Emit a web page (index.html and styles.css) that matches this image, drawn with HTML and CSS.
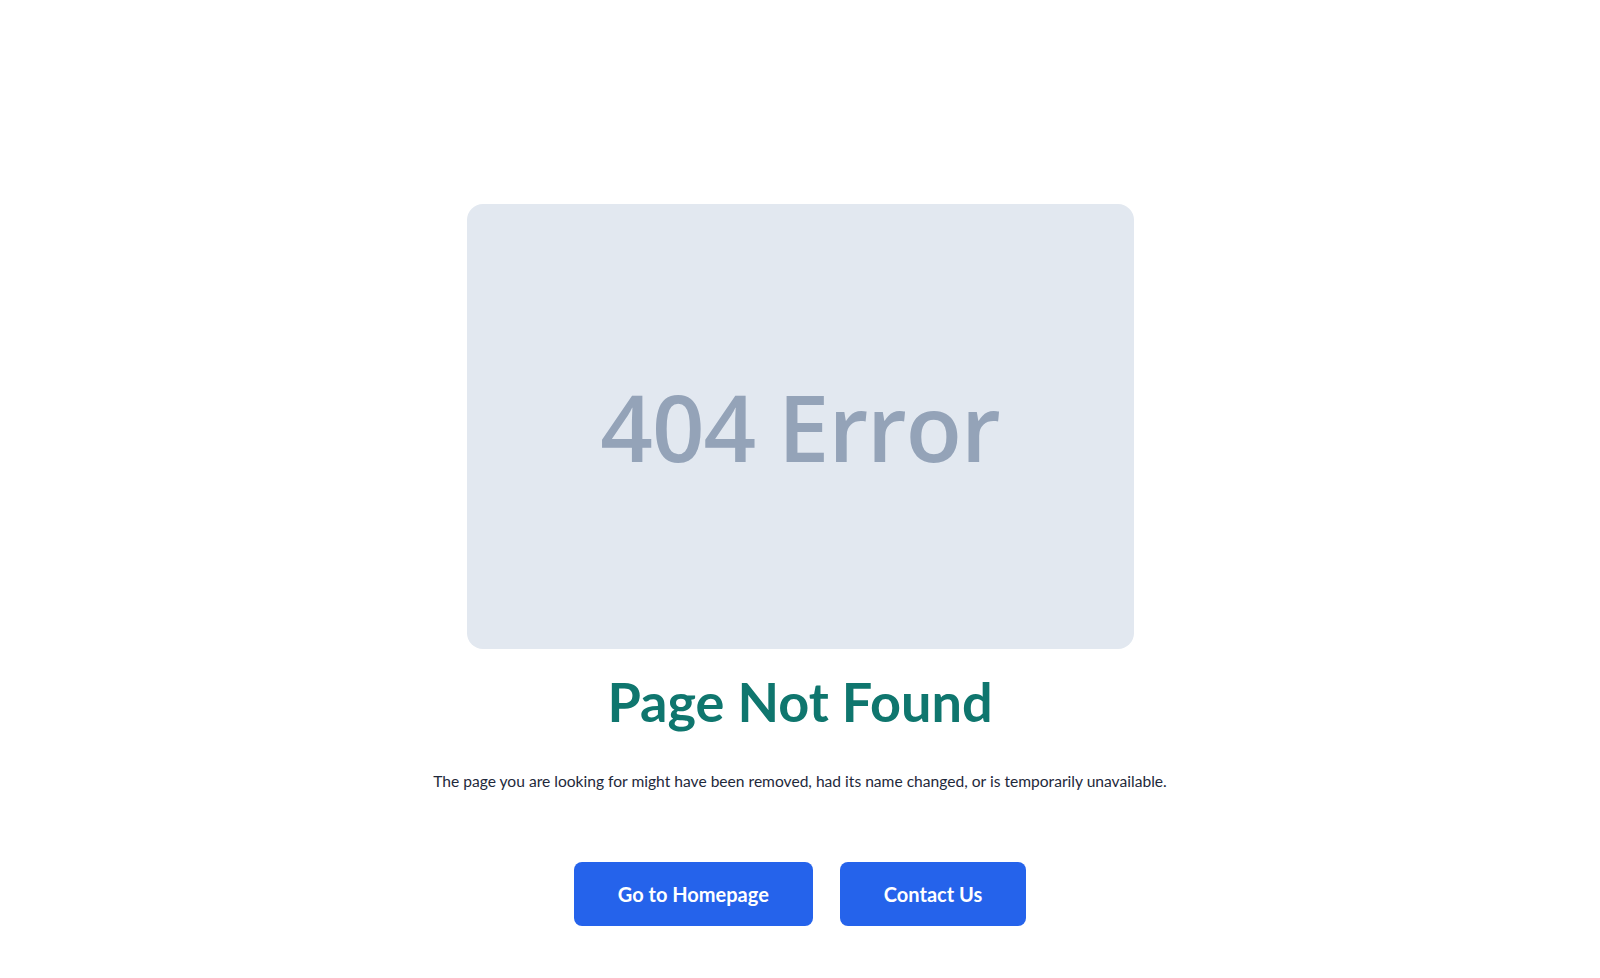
FILE: index.html
```html
<!DOCTYPE html>
<html lang="en">
<head>
    <meta charset="UTF-8">
    <meta name="viewport" content="width=device-width, initial-scale=1.0">
    <title>404 - Page Not Found</title>
    <link rel="stylesheet" href="styles.css">
</head>
<body>

    <!-- Error page content -->
    <main class="error-page">
        <!-- Placeholder illustration -->
        <div class="error-image">
            <span>404 Error</span>
        </div>

        <h1 class="error-title">Page Not Found</h1>

        <p class="error-text">The page you are looking for might have been removed, had its name changed, or is temporarily unavailable.</p>

        <!-- Action buttons -->
        <div class="error-actions">
            <a href="index.html" class="btn">Go to Homepage</a>
            <a href="contact.html" class="btn">Contact Us</a>
        </div>
    </main>

</body>
</html>
```

FILE: styles.css
```css
/* Reset and base page styles */
html, body {
    margin: 0;
    background-color: #ffffff;
    color: #1e293b;
    font-family: Lato, "Noto Sans", sans-serif;
}

/* Centered column holding everything */
.error-page {
    display: flex;
    flex-direction: column;
    align-items: center;
    padding-top: 204px;
    text-align: center;
}

/* Grey placeholder box */
.error-image {
    width: 667px;
    height: 445px;
    background-color: #e2e8f0;
    border-radius: 16px;
    display: flex;
    justify-content: center;
    align-items: center;
}

.error-image span {
    font-family: "Open Sans", sans-serif;
    font-weight: 600;
    font-size: 92px;
    letter-spacing: -1px;
    color: #94a3b8;
}

/* Heading */
.error-title {
    margin: 21px 0 0;
    font-size: 54px;
    font-weight: 700;
    line-height: 1.2;
    color: #0f766e;
}

/* Description */
.error-text {
    margin: 34px 0 0;
    font-size: 15.6px;
    line-height: 24px;
    color: #1e293b;
}

/* Buttons */
.error-actions {
    display: flex;
    gap: 27px;
    margin-top: 69px;
}

.btn {
    display: inline-block;
    padding: 20px 44px;
    background-color: #2563eb;
    color: #ffffff;
    font-size: 20px;
    font-weight: 700;
    line-height: 24px;
    text-decoration: none;
    border-radius: 8px;
}
```
